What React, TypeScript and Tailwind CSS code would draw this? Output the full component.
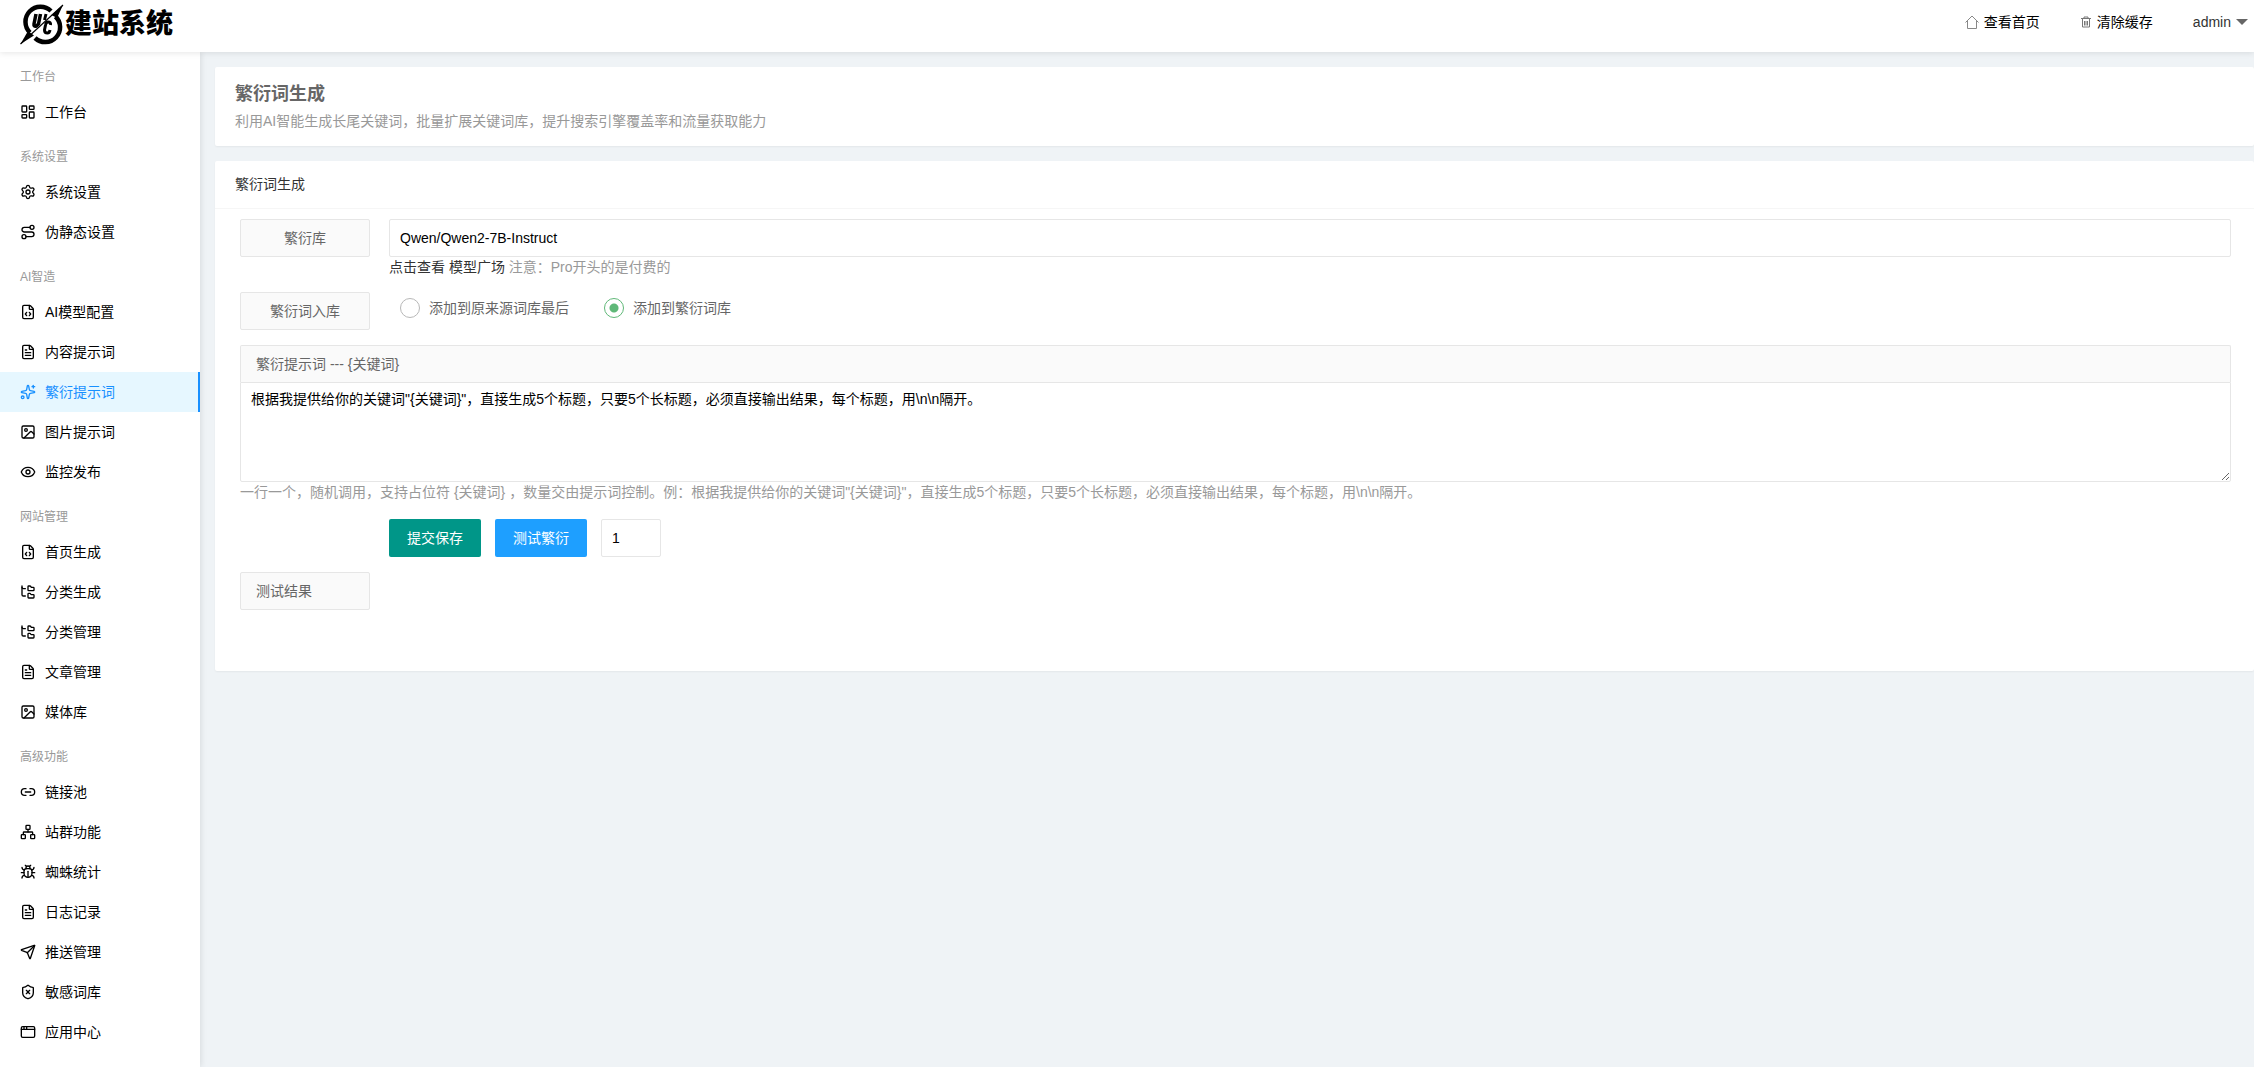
import type { ReactNode } from "react";
import {
    AppWindow,
    Bug,
    Eye,
    FileCode,
    FileText,
    FolderTree,
    Image,
    LayoutDashboard,
    Link2,
    Network,
    Route,
    Send,
    Settings,
    ShieldX,
    Sparkles,
    type LucideIcon,
} from "lucide-react";

type MenuItem = { label: string; icon: LucideIcon; active?: boolean };
type MenuGroup = { title: string; items: MenuItem[] };

const MENU: MenuGroup[] = [
    { title: "工作台", items: [{ label: "工作台", icon: LayoutDashboard }] },
    {
        title: "系统设置",
        items: [
            { label: "系统设置", icon: Settings },
            { label: "伪静态设置", icon: Route },
        ],
    },
    {
        title: "AI智造",
        items: [
            { label: "AI模型配置", icon: FileCode },
            { label: "内容提示词", icon: FileText },
            { label: "繁衍提示词", icon: Sparkles, active: true },
            { label: "图片提示词", icon: Image },
            { label: "监控发布", icon: Eye },
        ],
    },
    {
        title: "网站管理",
        items: [
            { label: "首页生成", icon: FileCode },
            { label: "分类生成", icon: FolderTree },
            { label: "分类管理", icon: FolderTree },
            { label: "文章管理", icon: FileText },
            { label: "媒体库", icon: Image },
        ],
    },
    {
        title: "高级功能",
        items: [
            { label: "链接池", icon: Link2 },
            { label: "站群功能", icon: Network },
            { label: "蜘蛛统计", icon: Bug },
            { label: "日志记录", icon: FileText },
            { label: "推送管理", icon: Send },
            { label: "敏感词库", icon: ShieldX },
            { label: "应用中心", icon: AppWindow },
        ],
    },
];

const PROMPT =
    '根据我提供给你的关键词"{关键词}"，直接生成5个标题，只要5个长标题，必须直接输出结果，每个标题，用\\n\\n隔开。';

function Logo() {
    return (
        <a href="#" className="flex items-center pb-1 text-black">
            {/* broken ring with a blade through it */}
            <svg width="45" height="46" viewBox="0 0 45 46" className="shrink-0">
                <path d="M31 10A14.500 14.500 0 0 0 10 31.500" fill="none" stroke="currentColor" strokeWidth="4.500" />
                <path d="M35.500 15.500A14.500 14.500 0 0 1 15 37" fill="none" stroke="currentColor" strokeWidth="4.500" />
                <path d="M43 4 37 17 31.500 14Z" fill="currentColor" />
                <path d="M.5 43 8 30 14 34.500Z" fill="currentColor" />
                <path d="M43 4 .5 43" stroke="currentColor" strokeWidth="1.200" />
                <path d="M16 13 14 23q-.5 3 2.500 2l2-2 2-10" fill="none" stroke="currentColor" strokeWidth="3.500" />
                <path d="M26 13l-1.500 6" stroke="currentColor" strokeWidth="3" />
                <path d="M30.500 24q.5-3-2.500-3-2 0-2.500 3l-1 5q0 3 3 3 2 0 2.500-3" fill="none" stroke="currentColor" strokeWidth="3" />
            </svg>
            <span className="text-[27px] leading-10 font-black">建站系统</span>
        </a>
    );
}

function Header() {
    return (
        <header className="relative z-20 flex h-13 items-center justify-between bg-white pr-1.5 pl-5 shadow-[0_1px_6px_rgba(0,0,0,0.1)]">
            <Logo />
            <nav className="flex items-center gap-10 pb-2">
                <a href="#" className="flex items-center gap-[5px] text-black">
                    <svg width="14" height="14" viewBox="0 0 14 14" fill="none" stroke="#888">
                        <path d="M.5 7.500 7 1l6.500 6.500M2.500 6v7.500h9V6" />
                    </svg>
                    查看首页
                </a>
                <a href="#" className="flex items-center gap-[5px] text-black">
                    <svg width="12" height="12" viewBox="0 0 12 12" fill="none" stroke="#777">
                        <path d="M1 2.500h10M4 2V1h4v1M2.500 3v8h7V3M4.500 5v4.500M6 5v4.500M7.500 5v4.500" />
                    </svg>
                    清除缓存
                </a>
                <button type="button" className="flex items-center gap-[5px] text-[#333]">
                    admin
                    <svg width="12" height="6" viewBox="0 0 12 6">
                        <path d="M0 0h12L6 6Z" fill="#666" />
                    </svg>
                </button>
            </nav>
        </header>
    );
}

function Sidebar() {
    return (
        <aside className="relative z-10 w-50 shrink-0 bg-white shadow-[1px_0_6px_rgba(0,0,0,0.1)]">
            {MENU.map((group) => (
                <section key={group.title} className="pt-2.5">
                    <h2 className="px-5 text-xs leading-[30px] text-[#999]">{group.title}</h2>
                    {group.items.map(({ label, icon: Icon, active }) => (
                        <a
                            key={label}
                            href="#"
                            className={
                                active
                                    ? "flex h-10 items-center gap-[9px] border-r-2 border-[#1890ff] bg-[#e6f7ff] pl-5 text-[#1890ff]"
                                    : "flex h-10 items-center gap-[9px] pl-5 text-black"
                            }
                        >
                            <Icon size={16} />
                            {label}
                        </a>
                    ))}
                </section>
            ))}
        </aside>
    );
}

function Card({ children }: { children: ReactNode }) {
    return <section className="rounded-xs bg-white shadow-[0_1px_2px_rgba(0,0,0,0.05)]">{children}</section>;
}

function RadioOption({ label, checked }: { label: string; checked?: boolean }) {
    return (
        <label className="flex items-center gap-[9px]">
            <input
                type="radio"
                name="target"
                defaultChecked={checked}
                className="size-5 appearance-none rounded-full border border-[#b8b8b8] bg-white checked:border-[#5fb878] checked:bg-[radial-gradient(circle,#5fb878_4px,transparent_5px)]"
            />
            {label}
        </label>
    );
}

export default function App() {
    return (
        <div className="flex min-h-screen flex-col bg-[#eff3f6] font-['Liberation_Sans','Noto_Sans_CJK_SC',sans-serif] text-sm text-[#666]">
            <Header />
            <div className="flex flex-1">
                <Sidebar />
                <main className="flex min-w-0 flex-1 flex-col gap-[15px] pt-[15px] pl-[15px]">
                    <Card>
                        <div className="px-5 pt-[15px] pb-[13px]">
                            <h1 className="text-lg leading-6 font-bold">繁衍词生成</h1>
                            <p className="pt-1 leading-[23px] text-[#999]">
                                利用AI智能生成长尾关键词，批量扩展关键词库，提升搜索引擎覆盖率和流量获取能力
                            </p>
                        </div>
                    </Card>

                    <Card>
                        <h2 className="border-b border-[#f6f6f6] px-5 leading-[47px] text-[#333]">繁衍词生成</h2>
                        <form className="pt-2.5 pr-[23px] pb-[61px] pl-[25px]">
                            <div className="flex gap-[19px]">
                                <label
                                    htmlFor="model"
                                    className="h-[38px] w-[130px] shrink-0 rounded-xs border border-[#e6e6e6] bg-[#fafafa] text-center leading-9"
                                >
                                    繁衍库
                                </label>
                                <div className="flex-1">
                                    <input
                                        id="model"
                                        defaultValue="Qwen/Qwen2-7B-Instruct"
                                        className="block h-[38px] w-full rounded-xs border border-[#e6e6e6] px-2.5 text-black"
                                    />
                                    <p className="leading-5 text-[#999]">
                                        <a href="#" className="text-[#333]">
                                            点击查看 模型广场
                                        </a>{" "}
                                        注意：Pro开头的是付费的
                                    </p>
                                </div>
                            </div>

                            <fieldset className="mt-[15px] flex gap-[30px]">
                                <div
                                    id="target-label"
                                    className="h-[38px] w-[130px] shrink-0 rounded-xs border border-[#e6e6e6] bg-[#fafafa] text-center leading-9"
                                >
                                    繁衍词入库
                                </div>
                                <div
                                    role="radiogroup"
                                    aria-labelledby="target-label"
                                    className="flex h-8 items-center gap-[35px]"
                                >
                                    <RadioOption label="添加到原来源词库最后" />
                                    <RadioOption label="添加到繁衍词库" checked />
                                </div>
                            </fieldset>

                            <div className="mt-[15px]">
                                <label
                                    htmlFor="prompt"
                                    className="block rounded-t-xs border border-b-0 border-[#e6e6e6] bg-[#fafafa] px-[15px] leading-9"
                                >
                                    繁衍提示词 --- {"{关键词}"}
                                </label>
                                <textarea
                                    id="prompt"
                                    defaultValue={PROMPT}
                                    className="block h-[100px] w-full rounded-b-xs border border-[#e6e6e6] px-2.5 py-1.5 leading-5 text-black"
                                />
                                <p className="leading-5 text-[#999]">
                                    一行一个，随机调用，支持占位符 {"{关键词}"} ，数量交由提示词控制。例：{PROMPT}
                                </p>
                            </div>

                            <div className="mt-[17px] flex gap-3.5 pl-[149px]">
                                <button type="button" className="h-[38px] rounded-xs bg-[#009688] px-[18px] text-white">
                                    提交保存
                                </button>
                                <button type="button" className="h-[38px] rounded-xs bg-[#1e9fff] px-[18px] text-white">
                                    测试繁衍
                                </button>
                                <input
                                    aria-label="数量"
                                    defaultValue="1"
                                    className="h-[38px] w-15 rounded-xs border border-[#e6e6e6] px-2.5 text-black"
                                />
                            </div>

                            <div className="mt-[15px] h-[38px] w-[130px] rounded-xs border border-[#e6e6e6] bg-[#fafafa] px-[15px] leading-9">
                                测试结果
                            </div>
                        </form>
                    </Card>
                </main>
            </div>
        </div>
    );
}
